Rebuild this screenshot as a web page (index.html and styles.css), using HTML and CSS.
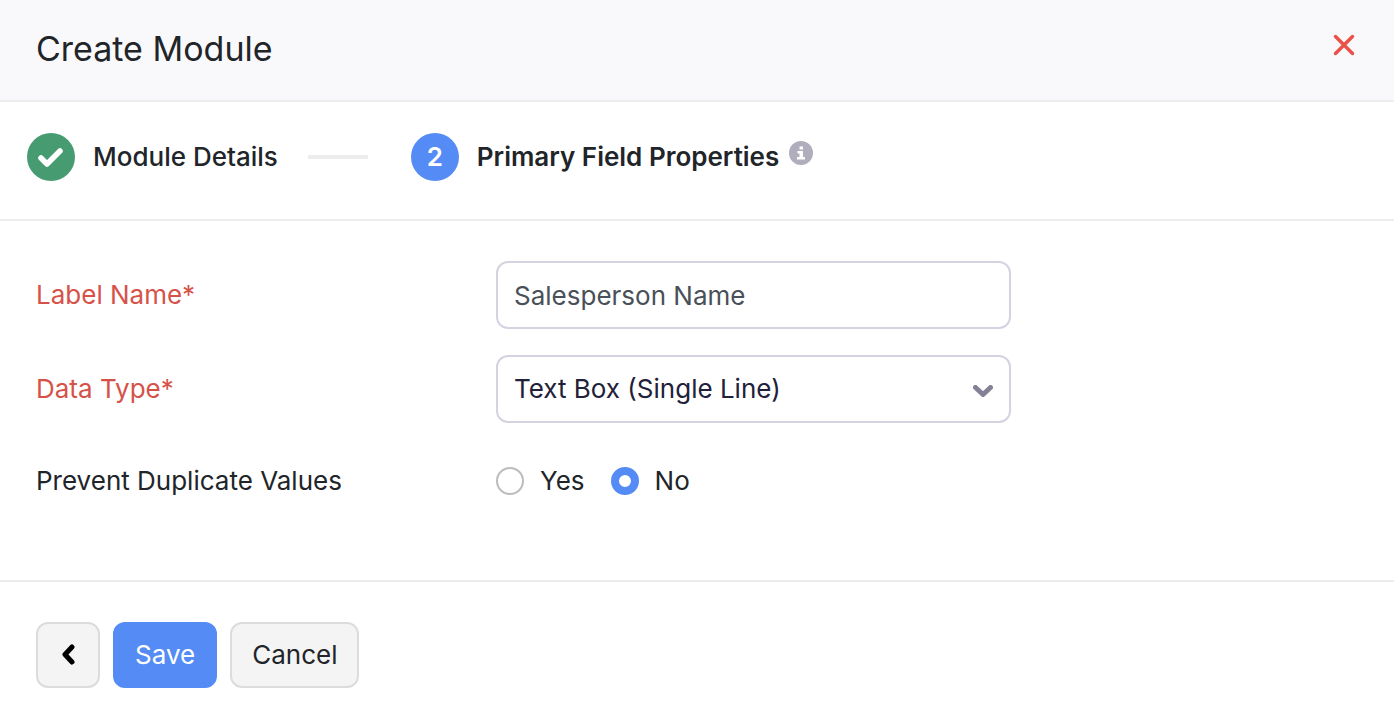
FILE: index.html
```html
<!DOCTYPE html>
<html lang="en">

<head>
    <meta charset="UTF-8">
    <meta name="viewport" content="width=device-width, initial-scale=1.0">
    <title>Create Module</title>
    <link rel="stylesheet" href="styles.css">
</head>

<body>
    <form class="modal">
        <header class="modal-header">
            <h1>Create Module</h1>
            <button type="button" class="close" aria-label="Close">
                <svg width="22" height="22" viewBox="0 0 22 22">
                    <path d="M2.500 2.500l17 17M19.500 2.500l-17 17" />
                </svg>
            </button>
        </header>

        <!-- steps -->
        <ol class="steps">
            <li class="step">
                <span class="step-icon done">
                    <svg width="28" height="22" viewBox="0 0 28 22">
                        <path d="M4 12l6 6L23 5" />
                    </svg>
                </span>
                <span class="step-name">Module Details</span>
            </li>
            <li class="line"></li>
            <li class="step active">
                <span class="step-icon">2</span>
                <span class="step-name">Primary Field Properties</span>
                <svg class="info" width="24" height="24" viewBox="0 0 24 24">
                    <circle cx="12" cy="12" r="12" />
                    <path d="M10.500 5.500h3.500v3h-3.500zM8.500 10h5.500v6h2v2.500H8V16h2.500v-3.500h-2z" />
                </svg>
            </li>
        </ol>

        <div class="modal-body">
            <div class="row">
                <label class="label required" for="labelName">Label Name*</label>
                <input class="field" type="text" id="labelName" value="Salesperson Name">
            </div>
            <div class="row">
                <label class="label required" for="dataType">Data Type*</label>
                <div class="select">
                    <select class="field" id="dataType">
                        <option>Text Box (Single Line)</option>
                    </select>
                    <svg width="20" height="12" viewBox="0 0 20 12">
                        <path d="M2.500 2.500L10 9.500l7.500-7" />
                    </svg>
                </div>
            </div>
            <div class="row" role="radiogroup" aria-labelledby="duplicate">
                <span class="label" id="duplicate">Prevent Duplicate Values</span>
                <div class="radios">
                    <label><input type="radio" name="duplicate">Yes</label>
                    <label><input type="radio" name="duplicate" checked>No</label>
                </div>
            </div>
        </div>

        <footer class="modal-footer">
            <button type="button" class="btn back" aria-label="Back">
                <svg width="14" height="22" viewBox="0 0 14 22">
                    <path d="M11 3L4 10.500l7 7.500" />
                </svg>
            </button>
            <button type="submit" class="btn save">Save</button>
            <button type="button" class="btn">Cancel</button>
        </footer>
    </form>
</body>

</html>
```

FILE: styles.css
```css
* {
    margin: 0;
    padding: 0;
    box-sizing: border-box;
}

body {
    background: #fff;
    color: #212529;
    font: 26px/32px Inter, "Liberation Sans", sans-serif;
}

input,
select,
button {
    font: inherit;
    color: inherit;
}

button {
    cursor: pointer;
}

svg {
    fill: none;
    stroke-linecap: round;
    stroke-linejoin: round;
}

/* header */
.modal-header {
    display: flex;
    justify-content: space-between;
    align-items: flex-start;
    padding: 27px 36px 29px;
    background: #f9f9fb;
    border-bottom: 2px solid #ededed;
}

.modal-header h1 {
    font-size: 34px;
    line-height: 44px;
    font-weight: 400;
}

.close {
    display: flex;
    padding: 7px 3px;
    background: none;
    border: none;
}

.close svg {
    stroke: #eb5149;
    stroke-width: 3.5;
}

/* steps */
.steps {
    display: flex;
    align-items: center;
    padding: 31px 27px 38px;
    list-style: none;
    border-bottom: 2px solid #ededed;
}

.step {
    display: flex;
    align-items: center;
    font-weight: 500;
}

.step.active {
    font-weight: 600;
}

.step-icon {
    display: flex;
    justify-content: center;
    align-items: center;
    width: 48px;
    height: 48px;
    margin-right: 18px;
    border-radius: 50%;
    background: #548bf4;
    color: #fff;
}

.step-icon.done {
    background: #479b71;
}

.step-icon svg {
    stroke: #fff;
    stroke-width: 5.5;
}

.line {
    width: 60px;
    height: 4px;
    margin: 0 43px 0 30px;
    background: #ededed;
}

.info {
    margin: 0 0 8px 10px;
    fill: #b0adbd;
}

.info path {
    fill: #fff;
}

/* form rows */
.modal-body {
    display: flex;
    flex-direction: column;
    gap: 26px;
    padding: 40px 36px 67px;
    border-bottom: 2px solid #ededed;
}

.row {
    display: flex;
    align-items: center;
}

.label {
    width: 460px;
}

.required {
    color: #d65249;
}

.field {
    width: 515px;
    height: 68px;
    padding: 0 16px;
    border: 2px solid #d5d3e2;
    border-radius: 12px;
    background: #fff;
    color: #495057;
    outline: none;
}

.field:focus {
    border-color: #548bf4;
}

.select {
    position: relative;
}

.select .field {
    appearance: none;
    color: #212139;
}

/* arrow over the select */
.select svg {
    position: absolute;
    top: 30px;
    right: 18px;
    stroke: #848096;
    stroke-width: 5;
    pointer-events: none;
}

.radios {
    display: flex;
    align-items: center;
    gap: 26px;
    height: 64px;
}

.radios label {
    display: flex;
    align-items: center;
    gap: 16px;
}

.radios input {
    appearance: none;
    width: 28px;
    height: 28px;
    border: 2px solid #bcbcbc;
    border-radius: 50%;
}

.radios input:checked {
    border: 8px solid #548bf4;
}

/* buttons */
.modal-footer {
    display: flex;
    gap: 13px;
    padding: 40px 36px 36px;
}

.btn {
    display: flex;
    justify-content: center;
    align-items: center;
    height: 66px;
    padding: 0 20px;
    border: 2px solid #dcdcdc;
    border-radius: 12px;
    background: #f4f4f4;
}

.btn.save {
    background: #548bf4;
    border-color: #548bf4;
    color: #fff;
}

.back {
    width: 64px;
}

.back svg {
    stroke: #000;
    stroke-width: 5;
}
```
